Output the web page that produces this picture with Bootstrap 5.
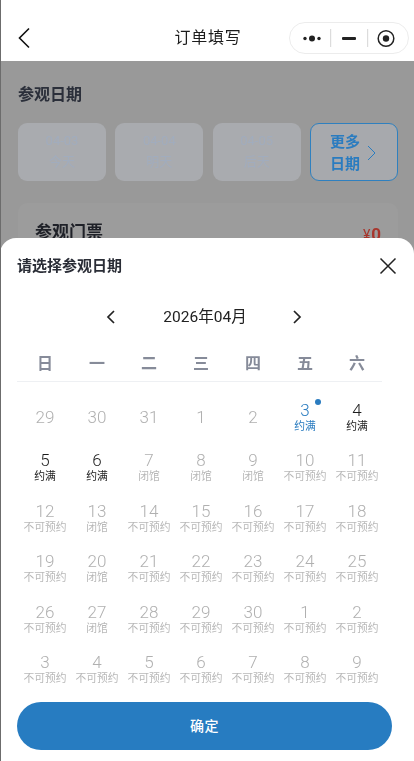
<!DOCTYPE html>
<html lang="zh">
<head>
<meta charset="utf-8">
<title>订单填写</title>
<link rel="stylesheet" href="https://cdn.jsdelivr.net/npm/bootstrap@5.3.0/dist/css/bootstrap.min.css">
<style>
html,body{height:100%;margin:0;overflow:hidden}
body{font-family:"Roboto","Noto Sans CJK SC",sans-serif;background:#fff;color:#222}
.phone{height:761px;width:414px;position:relative;overflow:hidden;background:#fff}
.edge{position:absolute;left:0;top:0;bottom:0;width:1px;background:#6c6c6c;z-index:5}
.topbar{height:61px;padding-top:15px;position:relative;background:#fff}
.back{position:absolute;left:17px;top:27px}
.pagetitle{font-size:16px;line-height:24px;text-align:center;margin-left:2px;padding-top:11px;color:#1d1d1d;letter-spacing:.7px}
.capsule{position:absolute;left:289px;top:22px;width:120px;height:32px;border:1px solid #ececec;border-radius:16px;background:#fff}
.capsule svg{display:block}
.under{background:#999;height:700px;padding:0 16px 0 18px}
.sect{font-size:16px;font-weight:700;line-height:24px;color:#2b2f3a;padding-top:22px}
.dates{gap:9.33px;margin-top:16px;width:380px}
.datebox{width:88px;height:58px;border-radius:9px;background:#a9abaf;color:#a1acbd;font-size:13px;line-height:21px;text-align:center;padding-top:7px}
.datebox.more{background:#a7a9ad;border:1px solid #2f80bf;color:#2a7cc0;font-weight:700;font-size:15px;line-height:22px;padding:7px 0 0 0;text-align:left}
.morewrap{padding-left:19px;gap:7px}
.ticket{margin-top:22px;width:380px;height:80px;border-radius:9px;background:#9c9c9c;padding:17px 17px}
.ticket b{font-size:17px;line-height:24px;color:#1f2128}
.price{color:#a8352c;font-weight:700;font-size:17px;line-height:24px;padding-top:2px}
.price i{font-style:normal;font-weight:400;font-size:14px;margin-right:1px}
.sheet{position:absolute;left:0;right:0;bottom:0;top:238px;background:#fff;border-radius:16px 16px 0 0;z-index:3;padding:0 17px}
.sheethead{height:55px;align-items:center}
.sheettitle{font-size:15px;font-weight:700;color:#2a2d36;line-height:20px}
.monthbar{height:34px;margin-top:7px;width:380px;position:relative}
.monthlabel{font-size:15.500px;line-height:34px;width:100%;text-align:center;color:#222;margin-left:-2px}
.chev{position:absolute;top:10px}
.weekrow{display:grid;grid-template-columns:repeat(7,52px);width:365px;padding-left:2px;margin-top:18px;height:30px;border-bottom:1px solid #eef0f3}
.weekrow span{text-align:center;font-size:16px;font-weight:700;color:#868b99;line-height:24px}
.daygrid{display:grid;grid-template-columns:repeat(7,52px);grid-auto-rows:50.400px;width:364px;margin-left:2px;margin-top:15px}
.cellx{text-align:center;position:relative;color:#b0b0b0;font-size:17px;line-height:20px;padding-top:3px;font-weight:300;height:50.400px}
.cellx small{display:block;font-size:10.800px;line-height:12px;margin-top:1px;color:#b8b8b8;white-space:nowrap;font-weight:400}
.cellx.on{color:#1c1c1c}.cellx.on small{color:#1c1c1c}
.cellx.now{color:#2a7cc0}.cellx.now small{color:#2a7cc0}
.cellx.plain{padding-top:10px}
.dot{position:absolute;width:6px;height:6px;border-radius:50%;background:#2a7cc0;left:36px;top:2px}
.confirm{position:absolute;left:17px;top:464px;width:375px;height:48px;border-radius:24px;border:0;background:#277cc1;color:#fff;font-size:14px;font-weight:500;line-height:48px;padding:0;letter-spacing:.4px}
.confirm:hover{background:#277cc1;color:#fff}
.daygrid,.weekrow,.monthbar,.sheethead,.pagetitle,.dates,.ticket,.sect{will-change:transform}
</style>
</head>
<body>
<div class="phone">
  <div class="edge"></div>
  <div class="topbar">
    <svg class="back" width="14" height="22" viewBox="0 0 14 22" fill="none" stroke="#111" stroke-width="1.600"><path d="M12 1.500 2.500 11 12 20.500"/></svg>
    <div class="pagetitle">订单填写</div>
    <div class="capsule">
      <svg width="118" height="30" viewBox="0 0 118 30">
        <circle cx="15" cy="15.500" r="1.700" fill="#222"/><circle cx="22" cy="15.500" r="3" fill="#222"/><circle cx="29" cy="15.500" r="1.700" fill="#222"/>
        <rect x="40" y="6" width="1.200" height="18" fill="#dcdcdc"/>
        <rect x="52" y="14" width="14" height="3" rx="1" fill="#222"/>
        <rect x="77" y="6" width="1.200" height="18" fill="#dcdcdc"/>
        <circle cx="96" cy="15.500" r="7.800" fill="none" stroke="#222" stroke-width="1.500"/><circle cx="96" cy="15.500" r="3.200" fill="#222"/>
      </svg>
    </div>
  </div>
  <div class="under">
    <div class="sect">参观日期</div>
    <div class="d-flex dates">
      <div class="datebox">04-03<br>今天</div>
      <div class="datebox">04-04<br>明天</div>
      <div class="datebox">04-05<br>后天</div>
      <div class="datebox more">
        <div class="d-flex align-items-center morewrap">
          <div>更多<br>日期</div>
          <svg width="9" height="16" viewBox="0 0 9 16" fill="none" stroke="#2a7cc0" stroke-width="1"><path d="M1 1l7 7-7 7"/></svg>
        </div>
      </div>
    </div>
    <div class="ticket d-flex justify-content-between">
      <b>参观门票</b>
      <span class="price"><i>¥</i>0</span>
    </div>
  </div>
  <div class="sheet">
    <div class="d-flex justify-content-between sheethead">
      <div class="sheettitle">请选择参观日期</div>
      <svg width="18" height="18" viewBox="0 0 18 18" fill="none" stroke="#222" stroke-width="1.500"><path d="M1.500 1.500l15 15M16.500 1.500l-15 15"/></svg>
    </div>
    <div class="monthbar">
      <svg class="chev" style="left:89px" width="9" height="14" viewBox="0 0 9 14" fill="none" stroke="#222" stroke-width="1.700"><path d="M8 1 2 7l6 6"/></svg>
      <div class="monthlabel">2026年04月</div>
      <svg class="chev" style="left:276px" width="9" height="14" viewBox="0 0 9 14" fill="none" stroke="#222" stroke-width="1.700"><path d="M1 1l6 6-6 6"/></svg>
    </div>
    <div class="weekrow"><span>日</span><span>一</span><span>二</span><span>三</span><span>四</span><span>五</span><span>六</span></div>
    <div class="daygrid">
      <div class="cellx plain">29</div><div class="cellx plain">30</div><div class="cellx plain">31</div><div class="cellx plain">1</div><div class="cellx plain">2</div>
      <div class="cellx now">3<span class="dot"></span><small>约满</small></div>
      <div class="cellx on">4<small>约满</small></div>

      <div class="cellx on">5<small>约满</small></div><div class="cellx on">6<small>约满</small></div><div class="cellx">7<small>闭馆</small></div><div class="cellx">8<small>闭馆</small></div><div class="cellx">9<small>闭馆</small></div><div class="cellx">10<small>不可预约</small></div><div class="cellx">11<small>不可预约</small></div>

      <div class="cellx">12<small>不可预约</small></div><div class="cellx">13<small>闭馆</small></div><div class="cellx">14<small>不可预约</small></div><div class="cellx">15<small>不可预约</small></div><div class="cellx">16<small>不可预约</small></div><div class="cellx">17<small>不可预约</small></div><div class="cellx">18<small>不可预约</small></div>

      <div class="cellx">19<small>不可预约</small></div><div class="cellx">20<small>闭馆</small></div><div class="cellx">21<small>不可预约</small></div><div class="cellx">22<small>不可预约</small></div><div class="cellx">23<small>不可预约</small></div><div class="cellx">24<small>不可预约</small></div><div class="cellx">25<small>不可预约</small></div>

      <div class="cellx">26<small>不可预约</small></div><div class="cellx">27<small>闭馆</small></div><div class="cellx">28<small>不可预约</small></div><div class="cellx">29<small>不可预约</small></div><div class="cellx">30<small>不可预约</small></div><div class="cellx">1<small>不可预约</small></div><div class="cellx">2<small>不可预约</small></div>

      <div class="cellx">3<small>不可预约</small></div><div class="cellx">4<small>不可预约</small></div><div class="cellx">5<small>不可预约</small></div><div class="cellx">6<small>不可预约</small></div><div class="cellx">7<small>不可预约</small></div><div class="cellx">8<small>不可预约</small></div><div class="cellx">9<small>不可预约</small></div>
    </div>
    <button type="button" class="btn confirm">确定</button>
  </div>
</div>
<script src="https://cdn.jsdelivr.net/npm/bootstrap@5.3.0/dist/js/bootstrap.bundle.min.js"></script>
</body>
</html>
